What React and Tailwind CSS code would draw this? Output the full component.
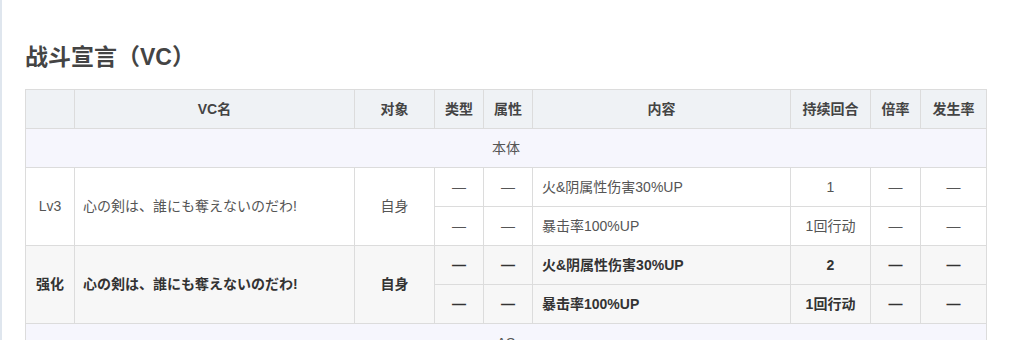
const cols = ['w-[49px]', 'w-[280px]', 'w-[80px]', 'w-[49px]', 'w-[49px]', 'w-[258px]', 'w-[80px]', 'w-[50px]', 'w-[66px]'];

const headers = ['', 'VC名', '对象', '类型', '属性', '内容', '持续回合', '倍率', '发生率'];

const groups = [
    {
        level: 'Lv3',
        name: '心の剣は、誰にも奪えないのだわ!',
        bold: false,
        effects: [
            { content: '火&阴属性伤害30%UP', turns: '1' },
            { content: '暴击率100%UP', turns: '1回行动' },
        ],
    },
    {
        level: '强化',
        name: '心の剣は、誰にも奪えないのだわ!',
        bold: true,
        effects: [
            { content: '火&阴属性伤害30%UP', turns: '2' },
            { content: '暴击率100%UP', turns: '1回行动' },
        ],
    },
];

const cell = 'border border-[#dcdcdc] h-[39px] p-0';

export default function App() {
    return (
        <div className="h-[340px] overflow-hidden bg-white border-l-2 border-[#dfe6ee] text-[14px] text-[#555]" style={{ fontFamily: '"Liberation Sans", "Noto Sans CJK SC", sans-serif' }}>
            <div className="pl-[23px] pt-[40px]">
                <h2 className="text-[23px] font-bold text-[#444] leading-[34px] mb-[15px]">战斗宣言（VC）</h2>

                <table className="table-fixed border-collapse w-[962px]">
                    <thead>
                        <tr className="bg-[#eff2f5]">
                            {headers.map((h, i) => (
                                <th key={i} className={`${cell} ${cols[i]} font-bold text-[#444]`}>{h}</th>
                            ))}
                        </tr>
                    </thead>
                    <tbody>
                        <tr className="bg-[#f6f6fd]">
                            <td colSpan={9} className={`${cell} text-center`}>本体</td>
                        </tr>
                        {groups.map((g) => (
                            g.effects.map((e, j) => {
                                const weight = g.bold ? 'font-bold text-[#333]' : '';
                                return (
                                    <tr key={g.level + j} className={g.bold ? 'bg-[#f7f7f7]' : 'bg-white'}>
                                        {j === 0 && (
                                            <>
                                                <td rowSpan={2} className={`${cell} text-center ${weight}`}>{g.level}</td>
                                                <td rowSpan={2} className={`${cell} px-[8px] ${weight}`}>{g.name}</td>
                                                <td rowSpan={2} className={`${cell} text-center ${weight}`}>自身</td>
                                            </>
                                        )}
                                        <td className={`${cell} text-center ${weight}`}>—</td>
                                        <td className={`${cell} text-center ${weight}`}>—</td>
                                        <td className={`${cell} px-[9px] ${weight}`}>{e.content}</td>
                                        <td className={`${cell} text-center ${weight}`}>{e.turns}</td>
                                        <td className={`${cell} text-center ${weight}`}>—</td>
                                        <td className={`${cell} text-center ${weight}`}>—</td>
                                    </tr>
                                );
                            })
                        ))}
                        <tr className="bg-[#f6f6fd]">
                            <td colSpan={9} className={`${cell} text-center`}>AS</td>
                        </tr>
                    </tbody>
                </table>
            </div>
        </div>
    );
}
